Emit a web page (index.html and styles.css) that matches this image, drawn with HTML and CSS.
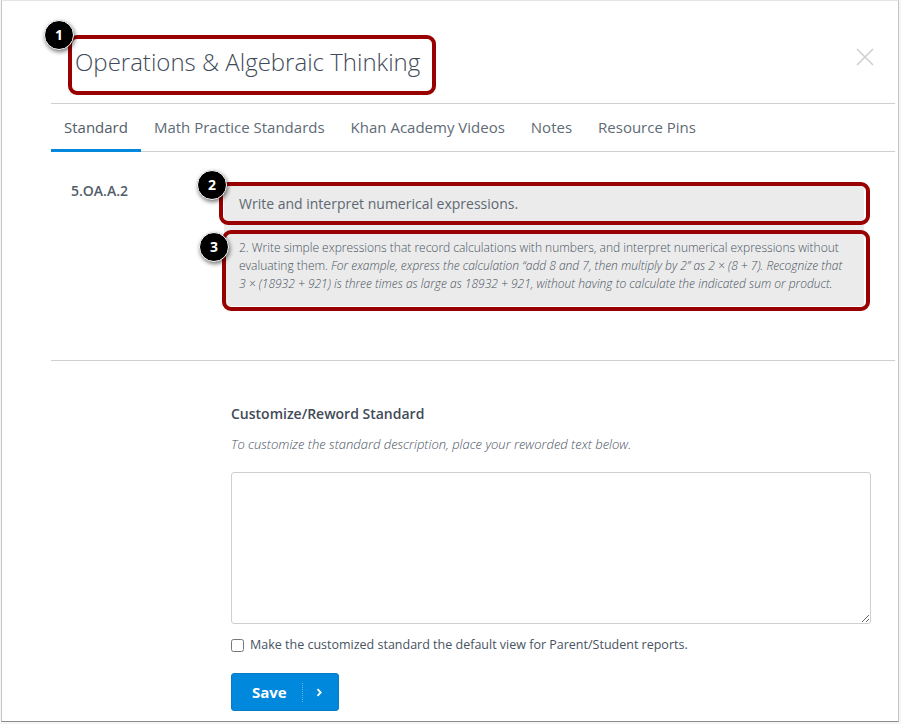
FILE: index.html
```html
<!DOCTYPE html>
<html lang="en">
<head>
<meta charset="utf-8">
<title>Operations &amp; Algebraic Thinking</title>
<link rel="stylesheet" href="styles.css">
</head>
<body>
<div class="window">
  <div class="dialog">
    <header class="head">
      <h1 class="title">Operations &amp; Algebraic Thinking</h1>
      <button class="close" type="button" aria-label="Close">
        <svg width="18" height="18" viewBox="0 0 18 18"><path d="M1 1 L17 17 M17 1 L1 17" stroke="#cfcfcf" stroke-width="1.6" fill="none"/></svg>
      </button>
    </header>
    <nav class="tabs">
      <a class="tab active">Standard</a>
      <a class="tab">Math Practice Standards</a>
      <a class="tab">Khan Academy Videos</a>
      <a class="tab">Notes</a>
      <a class="tab">Resource Pins</a>
    </nav>
    <section class="standard">
      <div class="code">5.OA.A.2</div>
      <div class="desc">
        <p class="desc-title">Write and interpret numerical expressions.</p>
        <p class="desc-body">2. Write simple expressions that record calculations with numbers, and interpret numerical expressions without evaluating them. <em>For example, express the calculation “add 8 and 7, then multiply by 2” as 2 × (8 + 7). Recognize that 3 × (18932 + 921) is three times as large as 18932 + 921, without having to calculate the indicated sum or product.</em></p>
      </div>
    </section>
    <section class="custom">
      <h2 class="custom-title">Customize/Reword Standard</h2>
      <p class="hint">To customize the standard description, place your reworded text below.</p>
      <textarea class="area"></textarea>
      <label class="check"><input type="checkbox" class="box"><span>Make the customized standard the default view for Parent/Student reports.</span></label>
      <button class="save" type="button"><span class="save-text">Save</span><span class="save-icon"><svg width="7" height="9" viewBox="0 0 7 9"><path d="M1.5 1.2 L4.7 4.5 L1.5 7.8" stroke="#fff" stroke-width="1.8" fill="none"/></svg></span></button>
    </section>
  </div>

  <div class="mark mark-1"></div>
  <div class="mark mark-2"></div>
  <div class="mark mark-3"></div>
  <div class="badge badge-1">1</div>
  <div class="badge badge-2">2</div>
  <div class="badge badge-3">3</div>
</div>
</body>
</html>
```
FILE: styles.css
```css
* { box-sizing: border-box; }
html, body { margin: 0; padding: 0; background: #f6f6f6; }
body {
  width: 901px;
  height: 724px;
  overflow: hidden;
  font-family: "Open Sans", "Liberation Sans", sans-serif;
  color: #48535f;
}
.window {
  position: relative;
  width: 898px;
  height: 722px;
  margin-left: 1px;
  background: #fff;
  border-left: 1px solid #c4c4c4;
  border-right: 1px solid #c4c4c4;
  border-top: 1px solid #e4e4e4;
  border-bottom: 1px solid #8c8c8c;
}
.dialog { padding: 0 3px 0 49px; }
.head {
  height: 103px;
  display: flex;
  justify-content: space-between;
  align-items: flex-start;
  border-bottom: 1px solid #cfcfcf;
  padding: 47px 21px 0 24px;
}
.title {
  margin: 0;
  font-size: 24px;
  line-height: 30px;
  margin-top: -1px;
  font-weight: 300;
  color: #3f4b58;
}
.close {
  margin-top: 0;
  padding: 0;
  border: 0;
  background: none;
  width: 18px;
  height: 18px;
  display: block;
}
.tabs {
  height: 48px;
  display: flex;
  border-bottom: 1px solid #cfcfcf;
}
.tab {
  padding: 14px 13px 0;
  font-size: 15px;
  line-height: 19px;
  color: #606b75;
  height: 48px;
}
.tab.active { border-bottom: 3px solid #0088dd; color: #525d68; }
.standard {
  height: 209px;
  display: flex;
  border-bottom: 1px solid #cfcfcf;
  padding: 29px 0 0 20px;
}
.code {
  width: 153px;
  font-size: 14px;
  line-height: 20px;
  font-weight: 600;
  color: #525d68;
}
.desc {
  width: 640px;
  height: 121px;
  margin-top: 4px;
  background: #ebebeb;
  padding: 9px 15px 0;
}
.desc-title { margin: 0 0 25px; font-size: 14px; line-height: 20px; color: #5d6872; }
.desc-body { margin: 0; font-size: 12px; line-height: 18px; font-weight: 300; color: #48535f; }
.custom { padding: 43px 0 0 180px; }
.custom-title { margin: 0; font-size: 14px; line-height: 19px; font-weight: 600; color: #3f4b58; }
.hint { margin: 12px 0 0; font-size: 13px; line-height: 18px; font-style: italic; font-weight: 300; color: #48535f; }
.area {
  display: block;
  width: 640px;
  height: 152px;
  margin-top: 19px;
  border: 1px solid #cfcfcf;
  border-radius: 3px;
  background: #fff;
}
.check {
  display: flex;
  align-items: center;
  gap: 6px;
  margin-top: 12px;
  font-size: 12.5px;
  line-height: 18px;
  color: #48535f;
}
.box { margin: 0; width: 13px; height: 13px; flex: none; }
.save {
  display: flex;
  align-items: center;
  width: 108px;
  height: 38px;
  margin-top: 19px;
  padding: 0;
  border: 1px solid #0a7cc4;
  border-radius: 3px;
  background: #0088dd;
  color: #fff;
  font-family: inherit;
}
.save-text { width: 70px; padding-left: 20px; text-align: left; font-size: 15px; line-height: 18px; font-weight: 700; }
.save-icon { border-left: 1px dotted #5db5ea; height: 19px; flex: 1; display: flex; align-items: center; padding-left: 13px; }

.mark {
  position: absolute;
  border: 4px solid #990000;
  border-radius: 9px;
  pointer-events: none;
}
.mark-1 { left: 66px; top: 34px; width: 368px; height: 60px; }
.mark-2 { left: 217px; top: 181px; width: 651px; height: 43px; }
.mark-3 { left: 220px; top: 229px; width: 648px; height: 81px; }
.badge {
  position: absolute;
  width: 30px;
  height: 30px;
  border-radius: 50%;
  background: #000;
  border: 1px solid #fff;
  box-shadow: 1px 2px 4px rgba(0,0,0,.55);
  color: #fff;
  font-size: 14px;
  line-height: 27px;
  font-weight: 700;
  text-align: center;
}
.badge-1 { left: 42px; top: 19px; }
.badge-2 { left: 195px; top: 169px; }
.badge-3 { left: 197px; top: 231px; }
```
